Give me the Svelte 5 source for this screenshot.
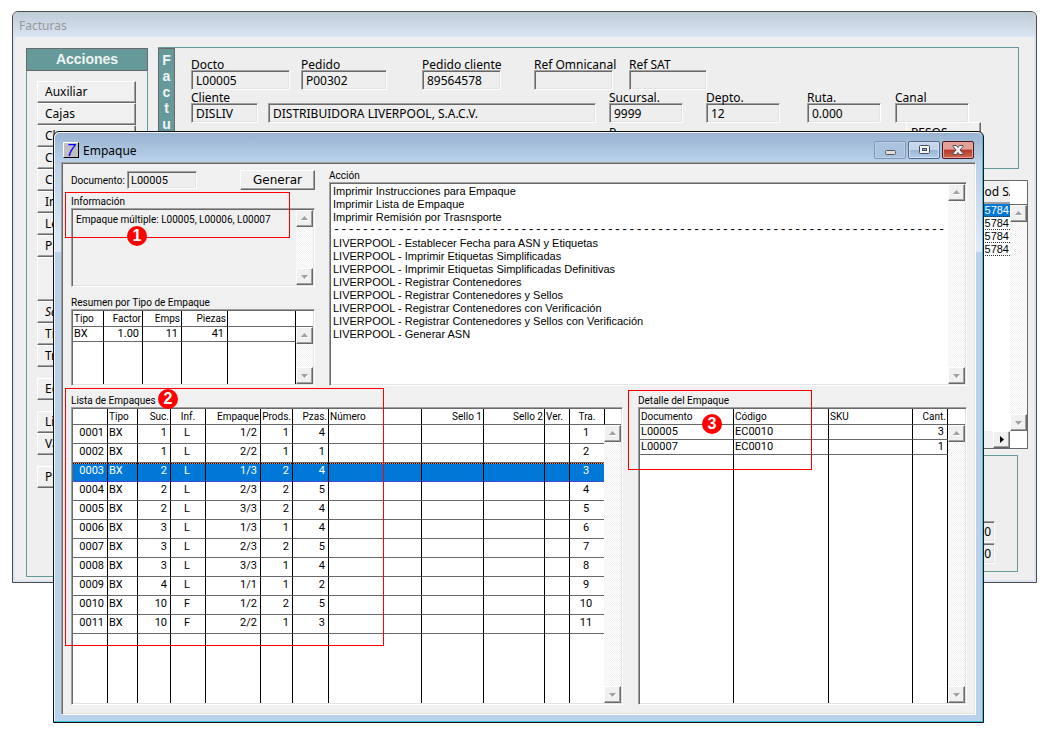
<script>
  const actionGroups = [
    ['Auxiliar', 'Cajas', 'Ch', 'C', 'C', 'In', 'Le', 'Pr', '', 'Sa', 'Ti', 'Tr'],
    ['Ec'],
    ['Li', 'Va'],
    ['Pr']
  ];

  const docFields = [
    { id: 'docto', label: 'Docto', value: 'L00005', width: 99 },
    { id: 'pedido', label: 'Pedido', value: 'P00302', width: 86 },
    { id: 'pedcliente', label: 'Pedido cliente', value: '89564578', width: 79 },
    { id: 'omnicanal', label: 'Ref Omnicanal', value: '', width: 79 },
    { id: 'refsat', label: 'Ref SAT', value: '', width: 78 }
  ];

  const clientFields = [
    { id: 'cliente', label: 'Cliente', value: 'DISLIV', width: 67 },
    { id: 'nombre', label: '', value: 'DISTRIBUIDORA LIVERPOOL, S.A.C.V.', width: 0 },
    { id: 'sucursal', label: 'Sucursal.', value: '9999', width: 74 },
    { id: 'depto', label: 'Depto.', value: '12', width: 74 },
    { id: 'ruta', label: 'Ruta.', value: '0.000', width: 74 },
    { id: 'canal', label: 'Canal', value: '', width: 74 }
  ];

  const actions = [
    'Imprimir Instrucciones para Empaque',
    'Imprimir Lista de Empaque',
    'Imprimir Remisión por Trasnsporte',
    '-'.repeat(85),
    'LIVERPOOL - Establecer Fecha para ASN y Etiquetas',
    'LIVERPOOL - Imprimir Etiquetas Simplificadas',
    'LIVERPOOL - Imprimir Etiquetas Simplificadas Definitivas',
    'LIVERPOOL - Registrar Contenedores',
    'LIVERPOOL - Registrar Contenedores y Sellos',
    'LIVERPOOL - Registrar Contenedores con Verificación',
    'LIVERPOOL - Registrar Contenedores y Sellos con Verificación',
    'LIVERPOOL - Generar ASN'
  ];

  // columns: [title, width (0 = takes the rest), align]
  const summaryCols = [
    ['Tipo', 31, 'left'],
    ['Factor', 39, 'right'],
    ['Emps', 39, 'right'],
    ['Piezas', 46, 'right'],
    ['', 0, 'left']
  ];
  const summaryRows = [['BX', '1.00', '11', '41', '']];

  const packCols = [
    ['', 35, 'right'],
    ['Tipo', 30, 'left'],
    ['Suc.', 33, 'right'],
    ['Inf.', 35, 'center'],
    ['Empaque', 55, 'right'],
    ['Prods.', 32, 'right'],
    ['Pzas.', 36, 'right'],
    ['Número', 0, 'left'],
    ['Sello 1', 62, 'right'],
    ['Sello 2', 61, 'right'],
    ['Ver.', 25, 'left'],
    ['Tra.', 34, 'center']
  ];
  const packs = [
    ['1', 'L', '1/2', '1', '4'],
    ['1', 'L', '2/2', '1', '1'],
    ['2', 'L', '1/3', '2', '4'],
    ['2', 'L', '2/3', '2', '5'],
    ['2', 'L', '3/3', '2', '4'],
    ['3', 'L', '1/3', '1', '4'],
    ['3', 'L', '2/3', '2', '5'],
    ['3', 'L', '3/3', '1', '4'],
    ['4', 'L', '1/1', '1', '2'],
    ['10', 'F', '1/2', '2', '5'],
    ['10', 'F', '2/2', '1', '3']
  ];
  const packRows = packs.map((p, i) => [
    String(i + 1).padStart(4, '0'), 'BX', ...p, '', '', '', '', String(i + 1)
  ]);

  const detailCols = [
    ['Documento', 94, 'left'],
    ['Código', 95, 'left'],
    ['SKU', 0, 'left'],
    ['Cant.', 35, 'right']
  ];
  const detailRows = [
    ['L00005', 'EC0010', '', '3'],
    ['L00007', 'EC0010', '', '1']
  ];

  let selected = $state(2);
</script>

{#snippet arrow(dir)}
  <button class="raised arrow {dir}" aria-label={dir}>
    <svg width="9" height="9" viewBox="0 0 9 9">
      {#if dir === 'right'}
        <path d="M3 1v7l4-3.5z" fill="#000" />
      {:else if dir === 'up'}
        <path d="M2 7h7L5.500 3z" fill="#fff" />
        <path d="M1 6h7L4.500 2z" fill="#a0a0a0" />
      {:else}
        <path d="M2 4h7L5.500 8z" fill="#fff" />
        <path d="M1 3h7L4.500 7z" fill="#a0a0a0" />
      {/if}
    </svg>
  </button>
{/snippet}

{#snippet scroll(head = '')}
  <div class="scroll">
    {#if head}<div class="scroll-head {head}"></div>{/if}
    <div class="track">
      {@render arrow('up')}
      {@render arrow('down')}
    </div>
  </div>
{/snippet}

{#snippet grid(cols, rows, kind, onpick)}
  <table class="grid {kind}">
    <colgroup>
      {#each cols as [, width]}
        <col style:width={width ? width + 'px' : 'auto'} />
      {/each}
    </colgroup>
    <thead>
      <tr>
        {#each cols as [title, , align]}
          <th class={align}>{title}</th>
        {/each}
      </tr>
    </thead>
    <tbody>
      {#each rows as row, r}
        <tr class="data" class:selected={onpick && r === selected} onclick={() => onpick?.(r)}>
          {#each row as cell, c}
            <td class={cols[c][2]}>{cell}</td>
          {/each}
        </tr>
      {/each}
      <tr class="filler">
        {#each cols as _}<td></td>{/each}
      </tr>
    </tbody>
  </table>
{/snippet}

{#snippet field(f)}
  <div class="field">
    <label for={f.id}>{f.label}</label>
    <input id={f.id} class="sunken" readonly value={f.value} style:width={f.width ? f.width + 'px' : 'calc(100% - 13px)'} />
  </div>
{/snippet}

<div class="desktop">
  <section class="facturas">
    <header class="fac-title">Facturas</header>
    <div class="fac-body">
      <aside class="acciones">
        <h2>Acciones</h2>
        {#each actionGroups as group}
          <div class="action-group">
            {#each group as name}
              <button class="raised" class:blank={!name} class:italic={name === 'Sa'}>{name}</button>
            {/each}
          </div>
        {/each}
      </aside>

      <div class="fac-main">
        <div class="fac-form">
          <div class="band">
            {#each 'Factu' as letter}<span>{letter}</span>{/each}
          </div>
          <div class="rows">
            <div class="row docs">
              {#each docFields as f}{@render field(f)}{/each}
            </div>
            <div class="row client">
              {#each clientFields as f}{@render field(f)}{/each}
            </div>
            <div class="row currency">
              <span>P</span>
              <button class="raised">PESOS</button>
            </div>
          </div>
        </div>

        <div class="fac-list">
          <div class="fac-grid">
            <table>
              <thead><tr><th>Cod SAT</th></tr></thead>
              <tbody>
                {#each [0, 1, 2, 3] as i}
                  <tr class:current={i === 0}><td>5784</td></tr>
                {/each}
              </tbody>
            </table>
            {@render scroll('tall')}
          </div>
          <div class="hscroll">{@render arrow('right')}</div>
        </div>

        <div class="totals">
          <input class="sunken" aria-label="Subtotal" readonly value="0.00" />
          <input class="sunken" aria-label="Total" readonly value="0.00" />
        </div>
      </div>
    </div>
  </section>

  <section class="empaque">
    <header class="emp-title">
      <span class="logo">7</span>
      <h1>Empaque</h1>
      <div class="controls">
        <button class="min" aria-label="Minimizar">
          <svg width="12" height="12" viewBox="0 0 12 12"><rect x="1.500" y="6.500" width="10" height="4" rx="1" fill="#ddd" stroke="#565656" /></svg>
        </button>
        <button aria-label="Maximizar">
          <svg width="12" height="12" viewBox="0 0 12 12"><rect x="1.500" y="1.500" width="10" height="8" rx="1" fill="#f4f4f4" stroke="#424a5c" /><rect x="4.500" y="4.500" width="4" height="2" fill="#8fb0d6" stroke="#424a5c" /></svg>
        </button>
        <button class="close" aria-label="Cerrar">
          <svg width="12" height="10" viewBox="0 0 12 10"><path d="M1 .5h3.500L6 2.500 7.500.5H11v1L8 5l3 3.500v1H7.500L6 7.500 4.500 9.500H1v-1L4 5 1 1.500z" fill="#f4f4f4" stroke="#4a4b5c" /></svg>
        </button>
      </div>
    </header>

    <div class="emp-frame">
      <div class="emp-body">
        <div class="top">
          <div class="left-col">
            <div class="doc-row">
              <label for="documento">Documento:</label>
              <input id="documento" class="sunken" readonly value="L00005" />
              <button class="raised generate">Generar</button>
            </div>
            <label class="cap" for="info">Información</label>
            <div class="sunken box info">
              <textarea id="info" readonly>Empaque múltiple: L00005, L00006, L00007</textarea>
              {@render scroll()}
            </div>
            <div class="cap">Resumen por Tipo de Empaque</div>
            <div class="sunken box summary">
              {@render grid(summaryCols, summaryRows, 'compact')}
              {@render scroll('plain')}
            </div>
          </div>

          <div class="right-col">
            <div class="cap">Acción</div>
            <div class="sunken box actions">
              <ul>
                {#each actions as action}
                  <li class:rule={action.startsWith('---')}>{action}</li>
                {/each}
              </ul>
              {@render scroll()}
            </div>
          </div>
        </div>

        <div class="bottom">
          <div>
            <div class="cap">Lista de Empaques</div>
            <div class="sunken box tall-box">
              {@render grid(packCols, packRows, 'open', (r) => (selected = r))}
              {@render scroll('lined')}
            </div>
          </div>
          <div>
            <div class="cap">Detalle del Empaque</div>
            <div class="sunken box tall-box">
              {@render grid(detailCols, detailRows, 'compact')}
              {@render scroll('plain')}
            </div>
          </div>
        </div>
      </div>
    </div>
  </section>

  <div class="mark mark-1"><b>1</b></div>
  <div class="mark mark-2"><b>2</b></div>
  <div class="mark mark-3"><b>3</b></div>
</div>

<style>
  :global(body) {
    margin: 0;
    background: #fff;
  }

  .desktop {
    position: relative;
    min-height: 732px;
    box-sizing: border-box;
    padding: 11px 10px 0 12px;
    font-family: 'Noto Sans', 'Open Sans', sans-serif;
    font-size: 12px;
    color: #000;
  }

  .desktop * {
    box-sizing: border-box;
  }

  button,
  input,
  textarea {
    margin: 0;
    padding: 0;
    border: 0;
    border-radius: 0;
    font: inherit;
    color: inherit;
    outline: 0;
  }

  .sunken {
    border: 1px solid;
    border-color: #a0a0a0 #fff #fff #a0a0a0;
    box-shadow: inset 1px 1px #696969, inset -1px -1px #e3e3e3;
    background: #eee;
  }

  .raised {
    border: 1px solid;
    border-color: #fff #696969 #696969 #fff;
    box-shadow: inset -1px -1px #a0a0a0;
    background: #f0f0f0;
  }

  /* Facturas window */
  .facturas {
    border: 1px solid #4a4a4a;
    border-radius: 6px 6px 0 0;
    background: #d9e5f2;
    padding: 0 2px 2px;
    overflow: hidden;
  }

  .fac-title {
    height: 25px;
    margin: 0 -2px;
    padding-left: 6px;
    line-height: 28px;
    color: #999;
    background: linear-gradient(#bfccd8, #d9e5f2);
  }

  .fac-body {
    display: flex;
    gap: 10px;
    background: #efefef;
    padding: 10px 6px 3px 11px;
  }

  .acciones {
    width: 122px;
    height: 529px;
    margin-top: 1px;
    border: 1px solid #699;
  }

  .acciones h2 {
    margin: -1px -1px 10px;
    height: 23px;
    border: 1px solid #696969;
    background: #699;
    color: #eef5f5;
    font: bold 14px/21px 'Liberation Sans', Arial, sans-serif;
    text-align: center;
  }

  .action-group {
    display: flex;
    flex-direction: column;
    padding: 0 11px 11px 10px;
  }

  .action-group button {
    height: 22px;
    padding-left: 7px;
    text-align: left;
    line-height: 20px;
  }

  .action-group .blank {
    height: 44px;
  }

  .action-group .italic {
    font-style: italic;
  }

  .fac-main {
    flex: 1;
    min-width: 0;
  }

  .fac-form {
    display: flex;
    height: 122px;
    margin-right: 9px;
    border: 1px solid #699;
    background: #eee;
  }

  .band {
    width: 17px;
    margin-left: -1px;
    padding-top: 3px;
    border: 1px solid #696969;
    background: #699;
    color: #eef5f5;
    font: bold 14px/16px 'Liberation Sans', Arial, sans-serif;
    display: flex;
    flex-direction: column;
    align-items: center;
  }

  .rows {
    flex: 1;
    padding: 10px 49px 0 16px;
  }

  .row {
    display: grid;
    margin-bottom: 1px;
  }

  .docs {
    grid-template-columns: 110px 121px 112px 95px 78px;
  }

  .client {
    grid-template-columns: 77px 1fr 97px 101px 88px 74px;
  }

  .field label {
    display: block;
    height: 12px;
    line-height: 14px;
    white-space: nowrap;
  }

  .field input {
    display: block;
    height: 20px;
    padding-left: 4px;
    background: #eee;
  }

  .currency {
    display: flex;
    justify-content: flex-end;
    margin: -2px -12px 0 0;
  }

  .currency span {
    width: 297px;
    line-height: 22px;
  }

  .currency button {
    width: 75px;
    height: 22px;
    padding-left: 4px;
    line-height: 18px;
    text-align: left;
  }

  .fac-list {
    height: 269px;
    margin-top: 11px;
    border: 1px solid #696969;
    background: #fff;
    display: flex;
    flex-direction: column;
  }

  .fac-grid {
    flex: 1;
    display: flex;
    justify-content: flex-end;
    align-items: flex-start;
  }

  .fac-grid > .scroll {
    align-self: stretch;
  }

  .fac-grid table {
    width: 33px;
    table-layout: fixed;
    border-spacing: 0;
  }

  .fac-grid th {
    height: 23px;
    padding: 0;
    font-weight: normal;
    text-align: left;
    overflow: hidden;
    white-space: nowrap;
    background: #f0f0f0;
    border-bottom: 2px solid #a0a0a0;
  }

  .fac-grid td {
    height: 13px;
    padding: 0 1px 0 0;
    font: 11px/12px 'Liberation Sans', Arial, sans-serif;
    text-align: right;
    border-bottom: 1px dotted #333;
  }

  .fac-grid .current td {
    background: #0078d7;
    color: #fff;
  }

  .hscroll {
    height: 17px;
    padding-right: 17px;
    display: flex;
    justify-content: flex-end;
    background: #f0f0f0 linear-gradient(#fff, #fff) right / 17px 100% no-repeat;
  }

  .totals {
    height: 117px;
    margin: 6px 10px 0 0;
    padding: 0 22px 7px 0;
    border: 1px solid #699;
    background: #eee;
    display: flex;
    flex-direction: column;
    justify-content: flex-end;
    align-items: flex-end;
    gap: 1px;
  }

  .totals input {
    width: 90px;
    height: 21px;
    padding-right: 3px;
    text-align: right;
  }

  /* Scroll bars */
  .scroll {
    width: 17px;
    flex: none;
    display: flex;
    flex-direction: column;
  }

  .scroll-head {
    height: 16px;
    background: #fff;
    border-bottom: 1px solid #696969;
  }

  .scroll-head.lined {
    border-left: 1px solid #000;
  }

  .scroll-head.tall {
    height: 24px;
  }

  .track {
    flex: 1;
    display: flex;
    flex-direction: column;
    justify-content: space-between;
    background: repeating-conic-gradient(#f0f0f0 0 25%, #fff 0 50%) 0 0 / 2px 2px;
  }

  .arrow {
    width: 17px;
    height: 17px;
    display: flex;
    align-items: center;
    justify-content: center;
  }

  /* Empaque window */
  .empaque {
    position: absolute;
    left: 53px;
    right: 63px;
    top: 131px;
    border: 1px solid #111;
    border-radius: 6px 6px 0 0;
    background: #b9d1ea;
    box-shadow: inset -1px -1px #38c0dc, inset 1px 1px #eef4fb;
    font-family: Roboto, 'Liberation Sans', sans-serif;
    font-size: 10px;
  }

  .emp-title {
    height: 29px;
    margin: 1px 1px 0;
    padding: 0 8px;
    display: flex;
    align-items: center;
    gap: 4px;
    border-radius: 5px 5px 0 0;
    background: linear-gradient(#99b4d1, #b9d1ea);
  }

  .logo {
    width: 16px;
    height: 16px;
    margin-top: 4px;
    border: 1px solid;
    border-color: #fff #000 #000 #fff;
    background: #c0c0c0;
    color: #00f;
    font: italic 16px/15px 'Liberation Sans', Arial, sans-serif;
    text-align: center;
  }

  h1 {
    flex: 1;
    margin: 6px 0 0;
    font: 12px/16px 'Noto Sans', 'Open Sans', sans-serif;
  }

  .controls {
    display: flex;
    gap: 2px;
    margin-top: 4px;
  }

  .controls button {
    width: 32px;
    height: 18px;
    display: flex;
    align-items: center;
    justify-content: center;
    border: 1px solid #52698a;
    border-radius: 2px;
    box-shadow: inset 0 0 0 1px #d3e2f3;
    background: linear-gradient(#c3d6ec 50%, #9ab6d6 50%, #b5cfea);
  }

  .controls .min {
    border-color: #7f98b8;
    box-shadow: inset 0 0 0 1px #bccfe5;
    background: #a9c2de;
  }

  .controls .close {
    border-color: #4c1720;
    box-shadow: inset 0 0 0 1px #e6a59b;
    background: linear-gradient(#e3a094 45%, #b5382a 50%, #cf6a50);
  }

  .emp-frame {
    margin: 0 1px 1px;
    padding: 0 6px 6px;
    background: linear-gradient(#b9d1ea, #dfeaf7) top / 100% 90px no-repeat;
  }

  .emp-body {
    border: 1px solid;
    border-color: #a0a0a0 #fff #fff #a0a0a0;
    box-shadow: inset 1px 1px #696969, inset -1px -1px #e3e3e3;
    background: #f0f0f0;
    padding: 7px 8px 9px 9px;
  }

  .top {
    display: grid;
    grid-template-columns: 244px 1fr;
    gap: 14px;
  }

  .bottom {
    display: grid;
    grid-template-columns: 1fr 329px;
    gap: 15px;
    margin-top: 9px;
  }

  .cap {
    display: block;
    height: 12px;
    line-height: 12px;
    white-space: nowrap;
  }

  .doc-row {
    display: flex;
    align-items: center;
    height: 20px;
    margin-bottom: 6px;
  }

  .doc-row label {
    width: 56px;
  }

  .doc-row input {
    width: 70px;
    height: 18px;
    padding-left: 3px;
    font-size: 11px;
  }

  .generate {
    width: 75px;
    height: 20px;
    margin-left: auto;
    font: 12px/16px 'DejaVu Sans', sans-serif;
  }

  .box {
    display: flex;
    padding: 1px;
    background: #fff;
  }

  .info {
    height: 79px;
    margin-bottom: 10px;
    background: #f0f0f0;
  }

  .info textarea {
    flex: 1;
    min-width: 0;
    padding: 3px;
    resize: none;
    overflow: hidden;
    white-space: nowrap;
    background: transparent;
    line-height: 13px;
  }

  .summary {
    height: 77px;
  }

  .tall-box {
    height: 298px;
  }

  .right-col {
    display: flex;
    flex-direction: column;
  }

  .actions {
    flex: 1;
  }

  ul {
    flex: 1;
    min-width: 0;
    margin: 0;
    padding: 1px 0 0 2px;
    list-style: none;
    overflow: hidden;
    font: 11px/13px 'Liberation Sans', Arial, sans-serif;
  }

  li {
    height: 13px;
    white-space: nowrap;
  }

  .rule {
    font: 12px/13px 'Liberation Mono', monospace;
  }

  /* Data grids */
  .grid {
    flex: 1;
    min-width: 0;
    width: 0;
    height: 100%;
    table-layout: fixed;
    border-spacing: 0;
    background: #fff;
  }

  .grid th,
  .grid td {
    padding: 0 3px 0 1px;
    border-right: 1px solid #000;
    border-bottom: 1px solid #696969;
    font-weight: normal;
    line-height: 15px;
    white-space: nowrap;
    vertical-align: top;
  }

  .grid th {
    height: 16px;
    padding-right: 1px;
  }

  .grid td {
    height: 19px;
    font-size: 11px;
  }

  .compact td {
    height: 15px;
    line-height: 14px;
  }

  .open th:last-child,
  .open td:last-child {
    border-right: 0;
  }

  .grid .filler td {
    height: auto;
    border-bottom: 0;
  }

  .grid .left {
    text-align: left;
  }

  .grid .right {
    text-align: right;
  }

  .grid .center {
    text-align: center;
  }

  .selected td {
    background: #0078d7 repeating-linear-gradient(90deg, #000 0 1px, #ff8728 1px 2px) top / 100% 1px no-repeat;
    color: #fff;
    border-bottom: 1px dotted #7a1fd0;
  }

  /* Red callouts laid over the windows */
  .mark {
    position: absolute;
    border: 1px solid #f00;
    pointer-events: none;
  }

  .mark b {
    position: absolute;
    width: 20px;
    height: 20px;
    border-radius: 50%;
    background: #f00;
    color: #fff;
    font: bold 16px/20px 'Liberation Sans', Arial, sans-serif;
    text-align: center;
  }

  .mark-1 {
    left: 65px;
    top: 192px;
    width: 225px;
    height: 46px;
  }

  .mark-1 b {
    left: 61px;
    top: 33px;
  }

  .mark-2 {
    left: 65px;
    top: 388px;
    width: 319px;
    height: 258px;
  }

  .mark-2 b {
    left: 92px;
    top: 0;
  }

  .mark-3 {
    right: 235px;
    top: 390px;
    width: 184px;
    height: 80px;
  }

  .mark-3 b {
    left: 73px;
    top: 23px;
  }
</style>
